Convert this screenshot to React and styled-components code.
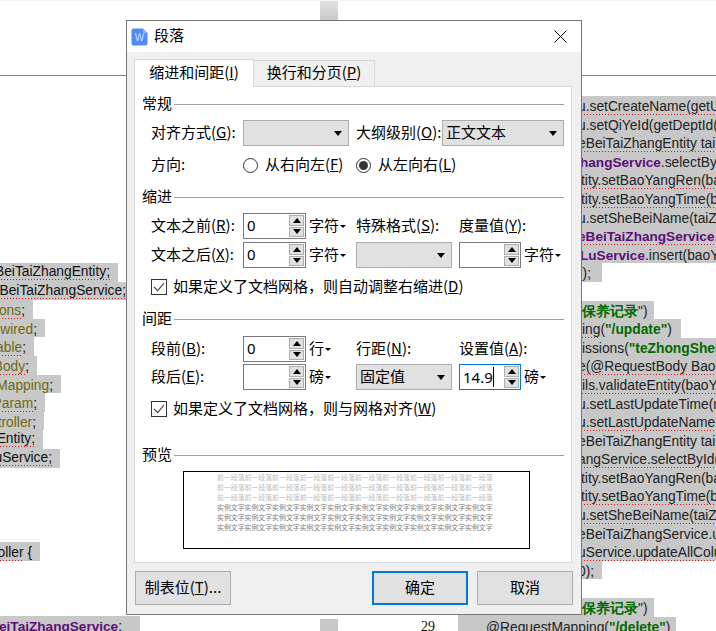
import React from "react";
import styled, { createGlobalStyle } from "styled-components";

const Global = createGlobalStyle`
  html, body { margin: 0; padding: 0; background: #fff; }
  body { width: 716px; height: 631px; overflow: hidden; }
  * { box-sizing: border-box; }
`;

const Page = styled.div`
  position: relative;
  width: 716px;
  height: 631px;
  overflow: hidden;
  background: #fff;
  font-family: "Liberation Sans", Arial, sans-serif;
`;

/* ---------- background document ---------- */
const TopStrip = styled.div`height: 1px; background: #f4f4f4;`;
const Header = styled.div`height: 74px; padding-left: 320px;`;
const HeaderBlock = styled.div`
  width: 18px;
  height: 20px;
  background: linear-gradient(#e2e2e2, #c8c8c8);
`;
const HeaderRule = styled.div`height: 1px; background: #808080;`;
const Columns = styled.div`
  display: grid;
  grid-template-columns: 320px 18px 120px 1fr;
  height: 555px;
`;
const LeftCol = styled.div`padding-top: 187px;`;
const Gutter = styled.div`align-self: end; height: 16px; background: #c8c8c8;`;
const PageNum = styled.div`
  align-self: end;
  height: 16px;
  padding-left: 83px;
  font: 14px/16px "Liberation Serif", serif;
  color: #111;
`;
const RightCol = styled.div`padding-top: 20px; overflow: hidden;`;

const LeftLine = styled.div`
  height: 18.6px;
  width: ${(p) => p.$w}px;
  padding-right: ${(p) => p.$pr ?? 8}px;
  display: flex;
  justify-content: flex-end;
  align-items: baseline;
  overflow: hidden;
  background: ${(p) => (p.$w ? "#c8c8c8" : "transparent")};
  font-size: 13.8px;
  line-height: 21px;
  white-space: nowrap;
  color: #111;
`;
const RightLine = styled.div`
  height: 18.6px;
  width: ${(p) => (p.$w ? `${p.$w}px` : "auto")};
  padding-left: ${(p) => p.$pl ?? 120}px;
  overflow: hidden;
  background: ${(p) => (p.$blank ? "transparent" : "#c8c8c8")};
  font-size: 13.8px;
  line-height: 21.5px;
  white-space: nowrap;
  color: #222;
`;
const Sq = styled.span`
  display: inline-block;
  flex: none;
  line-height: 17px;
  background-image: repeating-linear-gradient(to right, #e01818 0 1px, transparent 1px 3px);
  background-size: 100% 1px;
  background-repeat: no-repeat;
  background-position: 0 100%;
`;
const Olive = styled(Sq)`color: #6f6a10;`;
const Purple = styled(Sq)`color: #5d0e78; font-weight: 700; font-size: 13.6px;`;
const Green = styled.span`color: #006a00; font-weight: 700;`;

/* ---------- dialog ---------- */
const Dialog = styled.div`
  position: absolute;
  left: 126px;
  top: 20px;
  width: 456px;
  height: 595px;
  display: flex;
  flex-direction: column;
  background: #f0f0f0;
  border: 1px solid #767676;
  font-family: "Noto Sans CJK SC", "Noto Sans", sans-serif;
  font-size: 15px;
  line-height: 20px;
  color: #000;
  u { text-underline-offset: 1px; }
`;
const Label = styled.span`
  padding-bottom: 3px;
`;
const TitleBar = styled.div`
  height: 31px;
  flex: none;
  display: flex;
  align-items: center;
  padding: 0 14px 0 4px;
  gap: 6px;
  background: #fff;
`;
const TitleText = styled(Label)`flex: 1;`;
const Tabs = styled.div`
  display: flex;
  align-items: flex-end;
  height: 35px;
  flex: none;
  padding: 0 0 0 7px;
  position: relative;
  z-index: 1;
  margin-bottom: -1px;
`;
const Tab = styled.div`
  width: ${(p) => p.$w}px;
  height: ${(p) => (p.$active ? 28 : 27)}px;
  display: flex;
  align-items: center;
  justify-content: center;
  background: ${(p) => (p.$active ? "#fff" : "#f0f0f0")};
  border: 1px solid #d9d9d9;
  border-bottom: ${(p) => (p.$active ? "none" : "1px solid #d9d9d9")};
  border-left: ${(p) => (p.$active ? "1px solid #d9d9d9" : "none")};
`;
const Panel = styled.div`
  margin: 0 9px 0 7px;
  height: 477px;
  flex: none;
  padding: 8px 7px 0;
  background: #fff;
  border: 1px solid #d9d9d9;
`;
const Heading = styled.div`
  display: flex;
  align-items: center;
  gap: 2px;
  height: 18px;
  margin-top: ${(p) => p.$mt ?? 0}px;
  margin-bottom: ${(p) => p.$mb ?? 7}px;
  &::after {
    content: "";
    flex: 1;
    height: 1px;
    background: #a0a0a0;
  }
`;
const FormRow = styled.div`
  display: grid;
  grid-template-columns: ${(p) => p.$cols};
  align-items: center;
  height: 26px;
  margin-left: 9px;
  margin-top: ${(p) => p.$mt ?? 0}px;
  white-space: nowrap;
`;
const Combo = styled.div`
  height: 26px;
  width: ${(p) => p.$w}px;
  display: flex;
  align-items: center;
  justify-content: space-between;
  padding: 0 6px 0 3px;
  background: #e1e1e1;
  border: 1px solid #adadad;
`;
const Caret = styled.span`
  width: 0;
  height: 0;
  border-left: 4px solid transparent;
  border-right: 4px solid transparent;
  border-top: 5px solid #000;
`;
const SpinField = styled.div`
  width: ${(p) => p.$w ?? 63}px;
  height: 26px;
  display: flex;
  justify-content: space-between;
  padding: 1px;
  padding-left: 3px;
  background: #fff;
  border: 1px solid ${(p) => (p.$focus ? "#0078d7" : "#7a7a7a")};
  font-family: "Noto Sans", sans-serif;
  font-size: 15px;
  line-height: 20px;
`;
const FieldValue = styled.span`
  display: inline-block;
  height: 20px;
  ${(p) => p.$focus && "border-right: 1px solid #000; margin-top: 1px;"}
`;
const SpinBox = styled.div`
  width: 15px;
  display: flex;
  flex-direction: column;
  gap: 1px;
`;
const SpinBtn = styled.div`
  flex: 1;
  display: flex;
  align-items: center;
  justify-content: center;
  background: #e1e1e1;
  border: 1px solid #adadad;
`;
const TriUp = styled.span`
  width: 0; height: 0;
  border-left: 4.5px solid transparent;
  border-right: 4.5px solid transparent;
  border-bottom: 5px solid #000;
`;
const TriDown = styled.span`
  width: 0; height: 0;
  border-left: 4.5px solid transparent;
  border-right: 4.5px solid transparent;
  border-top: 5px solid #000;
`;
const Unit = styled.div`
  display: flex;
  align-items: center;
  gap: 1px;
  padding-left: 3px;
  &::after {
    content: "";
    width: 0; height: 0;
    border-left: 3px solid transparent;
    border-right: 3px solid transparent;
    border-top: 3.5px solid #000;
  }
`;
const RadioOption = styled.div`
  display: flex;
  align-items: center;
  gap: 7px;
`;
const RadioDot = styled.span`
  width: 15px;
  height: 15px;
  border-radius: 50%;
  border: 1px solid #333;
  display: flex;
  align-items: center;
  justify-content: center;
  &::after {
    content: "";
    width: 9px;
    height: 9px;
    border-radius: 50%;
    background: ${(p) => (p.$on ? "#333" : "transparent")};
  }
`;
const CheckRow = styled.div`
  display: flex;
  align-items: center;
  gap: 6px;
  height: 22px;
  margin: ${(p) => p.$mt}px 0 0 9px;
  white-space: nowrap;
`;
const CheckBox = styled.span`
  width: 16px;
  height: 16px;
  flex: none;
  display: flex;
  align-items: center;
  justify-content: center;
  border: 1px solid #333;
  background: #fff;
`;
const Preview = styled.div`
  width: 347px;
  height: 78px;
  margin-left: 41px;
  padding: 1px 0 0 33px;
  border: 1px solid #000;
  background: #fff;
  font-size: 6.9px;
  line-height: 9.9px;
  white-space: nowrap;
`;
const PreviewLine = styled.div`
  color: ${(p) => (p.$dark ? "#7c7c7c" : "#bcbcbc")};
`;
const Footer = styled.div`
  display: flex;
  justify-content: space-between;
  padding: 8px 8px 0;
`;
const Buttons = styled.div`display: flex; gap: 9px;`;
const Btn = styled.div`
  width: 96px;
  height: 34px;
  display: flex;
  align-items: center;
  justify-content: center;
  background: #e1e1e1;
  border: ${(p) => (p.$primary ? "2px solid #0078d7" : "1px solid #adadad")};
`;

const Spin = ({ value, focus, w }) => (
  <SpinField $focus={focus} $w={w}>
    <FieldValue $focus={focus}>{value}</FieldValue>
    <SpinBox>
      <SpinBtn><TriUp /></SpinBtn>
      <SpinBtn><TriDown /></SpinBtn>
    </SpinBox>
  </SpinField>
);

const Check = () => (
  <CheckBox>
    <svg width="12" height="10" viewBox="0 0 12 10" fill="none">
      <path d="M1 5l3.6 3.6L11 1.2" stroke="#444" strokeWidth="1.1" />
    </svg>
  </CheckBox>
);

const COLS = "92px 63px 50px 103px 62px 1fr";
const prevLines = "前一段落".repeat(10);
const sampleLines = "实例文字".repeat(10);

const left = [
  [118, "BeiTaiZhangEntity;", Sq],
  [127, "eBeiTaiZhangService;", Sq, 1],
  [33, "ons", Olive],
  [45, "wired", Olive],
  [34, "able", Olive],
  [37, "Body", Olive],
  [61, "Mapping", Olive],
  [45, "Param", Olive],
  [44, "troller", Olive],
  [43, "Entity;", Sq],
  [60, "uService;", Sq],
];

const rightTop = [
  [<Sq>u.setCreateName(getUserId());</Sq>],
  [<Sq>u.setQiYeId(getDeptId());</Sq>],
  [<Sq>eBeiTaiZhangEntity tai = null;</Sq>],
  [<><Purple>hangService</Purple><Sq>.selectById(baoYang</Sq></>, 122],
  [<Sq>tity.setBaoYangRen(baoYang);</Sq>, 123],
  [<Sq>tity.setBaoYangTime(baoYang);</Sq>, 123],
  [<Sq>u.setSheBeiName(taiZhang);</Sq>],
  [<><Purple>eBeiTaiZhangService</Purple>.update</>],
  [<><Purple>LuService</Purple>.<Sq>insert(baoYang);</Sq></>, 122],
];
const rightBottom = [
  [<>issions(<Green>"teZhongSheBei"</Green>)</>, 124],
  [<Sq>e(@RequestBody BaoYang</Sq>],
  [<Sq>ils.validateEntity(baoYang</Sq>, 124],
  [<Sq>u.setLastUpdateTime(new Date</Sq>],
  [<Sq>u.setLastUpdateName(getUser</Sq>],
  [<Sq>eBeiTaiZhangEntity tai = null;</Sq>],
  [<Sq>angService.selectById(baoYang</Sq>],
  [<Sq>tity.setBaoYangRen(baoYang);</Sq>, 123],
  [<Sq>tity.setBaoYangTime(baoYang);</Sq>, 123],
  [<Sq>u.setSheBeiName(taiZhang);</Sq>],
  [<Sq>eBeiTaiZhangService.update</Sq>],
  [<Sq>uService.updateAllColumn</Sq>],
];

export default function App() {
  return (
    <Page>
      <Global />
      <TopStrip />
      <Header><HeaderBlock /></Header>
      <HeaderRule />
      <Columns>
        <LeftCol>
          {left.map(([w, text, Comp, pr], i) => (
            <LeftLine key={i} $w={w} $pr={pr}>
              <Comp>{text}</Comp>
              {Comp === Olive ? ";" : ""}
            </LeftLine>
          ))}
          <LeftLine $w={0} />
          <LeftLine $w={0} />
          <LeftLine $w={0} />
          <LeftLine $w={0} />
          <LeftLine $w={40}><Sq>oller</Sq>&nbsp;{"{"}</LeftLine>
          <LeftLine $w={0} />
          <LeftLine $w={0} />
          <LeftLine $w={0} />
          <LeftLine $w={140} $pr={18}><Purple>BeiTaiZhangService</Purple>;</LeftLine>
        </LeftCol>
        <Gutter />
        <PageNum>29</PageNum>
        <RightCol>
          {rightTop.map(([c, pl], i) => <RightLine key={i} $pl={pl}>{c}</RightLine>)}
          <RightLine $w={144}>();</RightLine>
          <RightLine $blank />
          <RightLine $w={196} $pl={124}><Green>保养记录</Green>")</RightLine>
          <RightLine $w={223} $pl={124}><Sq>ing</Sq>(<Green>"/update"</Green>)</RightLine>
          {rightBottom.map(([c, pl], i) => <RightLine key={i} $pl={pl}>{c}</RightLine>)}
          <RightLine $w={144}>0);</RightLine>
          <RightLine $blank />
          <RightLine $w={196} $pl={124}><Green>保养记录</Green>")</RightLine>
          <RightLine $w={218} $pl={28}>@RequestMapping(<Green>"/delete"</Green>)</RightLine>
        </RightCol>
      </Columns>

      <Dialog>
        <TitleBar>
          <svg width="17" height="18" viewBox="0 0 17 18">
            <path d="M2.5 0.5H12L16.5 5V15.5a2 2 0 0 1-2 2h-12a2 2 0 0 1-2-2v-13a2 2 0 0 1 2-2z" fill="#4f8df5" />
            <path d="M12 0.5L16.5 5H13a1 1 0 0 1-1-1z" fill="#8db6fa" />
            <text x="8.5" y="13" textAnchor="middle" fontSize="10" fontFamily="Liberation Sans, sans-serif" fill="#cfe0ff">W</text>
          </svg>
          <TitleText>段落</TitleText>
          <svg width="13" height="13" viewBox="0 0 13 13" stroke="#000" strokeWidth="1" fill="none">
            <path d="M.5.5l12 12M12.5.5l-12 12" />
          </svg>
        </TitleBar>
        <Tabs>
          <Tab $active $w={120}><Label>缩进和间距(<u>I</u>)</Label></Tab>
          <Tab $w={121}><Label>换行和分页(<u>P</u>)</Label></Tab>
        </Tabs>
        <Panel>
          <Heading><Label>常规</Label></Heading>
          <FormRow $cols="92px 113px 86px 1fr">
            <Label>对齐方式(<u>G</u>):</Label>
            <Combo $w={106}><span /><Caret /></Combo>
            <Label>大纲级别(<u>O</u>):</Label>
            <Combo $w={122}><Label>正文文本</Label><Caret /></Combo>
          </FormRow>
          <FormRow $cols="92px 113px 1fr" $mt={6}>
            <Label>方向:</Label>
            <RadioOption><RadioDot /><Label>从右向左(<u>F</u>)</Label></RadioOption>
            <RadioOption><RadioDot $on /><Label>从左向右(<u>L</u>)</Label></RadioOption>
          </FormRow>

          <Heading $mt={10} $mb={7}><Label>缩进</Label></Heading>
          <FormRow $cols={COLS}>
            <Label>文本之前(<u>R</u>):</Label>
            <Spin value="0" />
            <Unit><Label>字符</Label></Unit>
            <Label>特殊格式(<u>S</u>):</Label>
            <Label>度量值(<u>Y</u>):</Label>
          </FormRow>
          <FormRow $cols={COLS} $mt={3}>
            <Label>文本之后(<u>X</u>):</Label>
            <Spin value="0" />
            <Unit><Label>字符</Label></Unit>
            <Combo $w={96}><span /><Caret /></Combo>
            <Spin w={62} />
            <Unit><Label>字符</Label></Unit>
          </FormRow>
          <CheckRow $mt={8}>
            <Check />
            <Label>如果定义了文档网格，则自动调整右缩进(<u>D</u>)</Label>
          </CheckRow>

          <Heading $mt={12} $mb={8}><Label>间距</Label></Heading>
          <FormRow $cols={COLS}>
            <Label>段前(<u>B</u>):</Label>
            <Spin value="0" />
            <Unit><Label>行</Label></Unit>
            <Label>行距(<u>N</u>):</Label>
            <Label>设置值(<u>A</u>):</Label>
          </FormRow>
          <FormRow $cols={COLS} $mt={2}>
            <Label>段后(<u>E</u>):</Label>
            <Spin />
            <Unit><Label>磅</Label></Unit>
            <Combo $w={96}><Label>固定值</Label><Caret /></Combo>
            <Spin value="14.9" focus w={62} />
            <Unit><Label>磅</Label></Unit>
          </FormRow>
          <CheckRow $mt={8}>
            <Check />
            <Label>如果定义了文档网格，则与网格对齐(<u>W</u>)</Label>
          </CheckRow>

          <Heading $mt={26}><Label>预览</Label></Heading>
          <Preview>
            <PreviewLine>{prevLines}</PreviewLine>
            <PreviewLine>{prevLines}</PreviewLine>
            <PreviewLine>{prevLines}</PreviewLine>
            <PreviewLine $dark>{sampleLines}</PreviewLine>
            <PreviewLine $dark>{sampleLines}</PreviewLine>
            <PreviewLine $dark>{sampleLines}</PreviewLine>
          </Preview>
        </Panel>
        <Footer>
          <Btn><Label>制表位(<u>T</u>)...</Label></Btn>
          <Buttons>
            <Btn $primary><Label>确定</Label></Btn>
            <Btn><Label>取消</Label></Btn>
          </Buttons>
        </Footer>
      </Dialog>
    </Page>
  );
}
